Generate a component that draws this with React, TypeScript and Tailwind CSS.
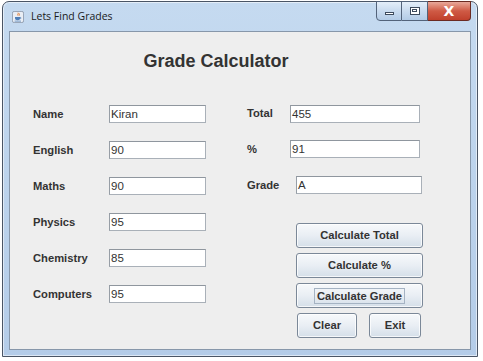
import React from "react"

const font = "font-['Liberation_Sans',Arial,sans-serif]"

const Label = ({ text, w }: { text: string; w: string }) => (
  <div className={`${w} shrink-0 text-[11.2px] font-bold text-[#333]`}>{text}</div>
)

const Field = ({ value, w }: { value: string; w: string }) => (
  <div
    className={`${w} h-[18px] shrink-0 border border-[#a9b0b8] border-t-[#8f969e] border-l-[#979ea6] bg-white pl-[1px] text-[11.5px] leading-[16px] text-[#333]`}
  >
    {value}
  </div>
)

const Btn = ({ text, w, focus }: { text: string; w: string; focus?: boolean }) => (
  <button
    className={`${w} flex h-[25px] items-center justify-center rounded-[3px] border border-[#7b8898] bg-gradient-to-b from-[#f7f9fb] via-[#e9eef4] to-[#d5dfe9] text-[11.2px] font-bold text-[#333] shadow-[inset_0_0_0_1px_rgba(255,255,255,0.75)]`}
  >
    {focus ? (
      <span className="border border-[#a5b3c3] px-[2px] leading-[14px]">{text}</span>
    ) : (
      text
    )}
  </button>
)

const JavaIcon = () => (
  <svg width="12" height="12" viewBox="0 0 14 14">
    <rect x="0.5" y="0.5" width="13" height="13" rx="2" fill="#e9eef5" stroke="#8a97a8" />
    <path d="M7 2c1 1.2-1 2 0 3.4M8.6 3c.6.9-.7 1.4 0 2.3" stroke="#e0701e" strokeWidth="1.1" fill="none" />
    <path d="M3.5 7h6v1.6c0 1.4-1.2 2.2-3 2.2s-3-.8-3-2.2z" fill="#4f7fb8" />
    <path d="M9.5 7.4c1.4 0 1.4 1.6 0 1.6" stroke="#4f7fb8" strokeWidth="0.9" fill="none" />
    <path d="M3 11.8h7.5" stroke="#4f7fb8" strokeWidth="0.9" />
  </svg>
)

export default function App() {
  const left = [
    ["Name", "Kiran"],
    ["English", "90"],
    ["Maths", "90"],
    ["Physics", "95"],
    ["Chemistry", "85"],
    ["Computers", "95"],
  ]

  return (
    <div className={`h-[361px] w-[483px] overflow-hidden bg-white ${font}`}>
      <div className="ml-[2px] mt-[1px] flex h-[356px] w-[476px] flex-col rounded-t-[7px] border border-[#4a5565] bg-gradient-to-b from-[#c5daf0] via-[#bcd3ec] to-[#b4cce8] shadow-[inset_0_0_0_1px_rgba(255,255,255,0.55)]">
        {/* title bar */}
        <div className="relative flex h-[29px] shrink-0 items-center pl-[9px]">
          <JavaIcon />
          <span className="ml-[7px] font-['Open_Sans',sans-serif] text-[10.5px] text-[#1b1b1b]">
            Lets Find Grades
          </span>
          <div className="absolute right-[6px] top-[-1px] flex h-[20px]">
            <div className="flex w-[26px] items-center justify-center rounded-bl-[4px] border border-[#53637a] bg-gradient-to-b from-[#e4eef9] via-[#c9dbef] to-[#b3cbe6]">
              <div className="mt-[4px] h-[3px] w-[9px] border border-[#3d4a5c] bg-white" />
            </div>
            <div className="flex w-[26px] items-center justify-center border border-l-0 border-[#53637a] bg-gradient-to-b from-[#e4eef9] via-[#c9dbef] to-[#b3cbe6]">
              <div className="h-[8px] w-[10px] border border-[#3d4a5c] bg-white">
                <div className="mx-auto mt-[1px] h-[3px] w-[5px] border border-[#3d4a5c]" />
              </div>
            </div>
            <div className="flex w-[43px] items-center justify-center rounded-br-[4px] border border-l-0 border-[#6b2a22] bg-gradient-to-b from-[#e8a89a] via-[#cf5a45] to-[#c0402c]">
              <span className="font-['DejaVu_Sans',sans-serif] text-[14px] font-bold leading-none text-white">
                X
              </span>
            </div>
          </div>
        </div>

        {/* client area */}
        <div className="mx-[6px] mb-[6px] flex-1 border border-[#8797aa] bg-[#eeeeee]">
          <div className="pt-[18px] text-center text-[18px] font-bold leading-[22px] text-[#333]">
            <span className="mr-[48px]">Grade Calculator</span>
          </div>

          <div className="mt-[24px] flex pl-[23px]">
            <div className="flex flex-col">
              {left.map(([l, v]) => (
                <div key={l} className="flex h-[36px] items-center">
                  <Label text={l} w="w-[76px]" />
                  <Field value={v} w="w-[97px]" />
                </div>
              ))}
            </div>

            <div className="ml-[41px] flex flex-col">
              <div className="flex h-[35px] items-center">
                <Label text="Total" w="w-[43px]" />
                <Field value="455" w="w-[130px]" />
              </div>
              <div className="flex h-[36px] items-center">
                <Label text="%" w="w-[43px]" />
                <Field value="91" w="w-[130px]" />
              </div>
              <div className="flex h-[36px] items-center">
                <Label text="Grade" w="w-[49px]" />
                <Field value="A" w="w-[126px]" />
              </div>

              <div className="ml-[49px] mt-[20px] flex flex-col gap-[5px]">
                <Btn text="Calculate Total" w="w-[127px]" />
                <Btn text="Calculate %" w="w-[127px]" />
                <Btn text="Calculate Grade" w="w-[127px]" focus />
                <div className="flex gap-[12px] pl-[1px]">
                  <Btn text="Clear" w="w-[60px]" />
                  <Btn text="Exit" w="w-[52px]" />
                </div>
              </div>
            </div>
          </div>
        </div>
      </div>
    </div>
  )
}
